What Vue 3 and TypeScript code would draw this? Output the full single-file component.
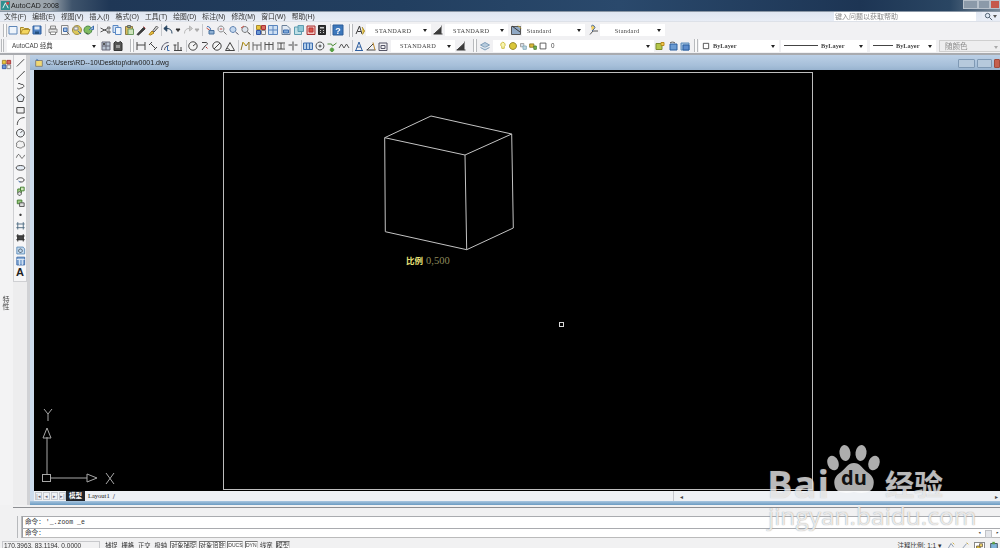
<script setup lang="ts">
type P = [string, string, string];
type Item = { k: 'i' | 'sep' | 'grip' | 'sp' | 'combo'; w: number; n?: string; text?: string; center?: boolean; line?: number; lead?: boolean; off?: boolean; cls?: string };

const K = '#3a3a3a', B = '#3c6cae', L = '#a9c4e4', Y = '#e9c53f', G = '#57a043', R = '#c74a3e', N = 'none';

const icons: Record<string, P[]> = {
  new: [['M2 2.500h8v7.500h-8z', '#5e86b8', '#eef4fb']],
  open: [['M1.500 10V3.500h3l1 1h4v1.500', '#a88a2c', '#f1d873'], ['M1.500 10l2-4.500h7.500l-2 4.500z', '#b18f2c', '#f4d65f']],
  save: [['M2 2h8v8h-8z', '#2f5f9f', '#4f82c4'], ['M3.500 2.500h5v3h-5z', N, '#dfe9f5'], ['M4 7.500h4v2.500h-4z', N, '#24507f']],
  print: [['M3.500 2h5v3h-5zM2 5h8v3.500h-8z', '#888', '#e8e8e8'], ['M3.500 8h5v2.500h-5z', '#888', '#fff']],
  prev: [['M2.500 1.500h6.500v9h-6.500z', '#888', '#f5f5f5'], ['M8 8l2.500 2.500', '#666', N], ['M4.500 4h3.500v3.500h-3.500z', '#3f6cae', L]],
  plot: [['M6 1.500a4.500 4.500 0 1 1-.1 0z', '#a08e45', '#ddc85a'], ['M3 3h4v3h-4z', '#888', '#eee'], ['M7 7l3 3', B, N]],
  pub: [['M5 2a4 4 0 1 1-.1 0z', '#4d8a4a', '#7fbb60'], ['M6 6l4.500-4v3.500h-2', B, L], ['M3 8.500l2 2', K, N]],
  cut: [['M1.500 4l7 3.500M1.500 8l7-3.500', '#555', N], ['M8.500 3h2.500v2h-2.500zM8.500 7h2.500v2h-2.500z', '#777', '#aaa']],
  copy: [['M2 1.500h5v7h-5z', '#5a88c4', '#d8e6f6'], ['M4.500 3.500h5.500v7h-5.500z', '#5a88c4', '#eef5fc']],
  paste: [['M2.500 2.500h7v8h-7z', '#8a7a46', '#d9b95a'], ['M4.500 1.500h3v2h-3z', '#666', '#9ab98a'], ['M5 5h5.500v5.500h-5.500z', '#6b9a5f', '#cfe4bd']],
  match: [['M2 10.500l6.500-7 1.500 1.500-6.500 6z', K, K], ['M8.500 2.500l2 2', '#b44', N]],
  brush: [['M2 10.500l3-3.500 2 2-3.500 2z', '#a87d1c', Y], ['M6 6.500l3.500-4.500 1.500 1.500-4 4.500z', '#555', '#d9d9d9']],
  undo: [['M10 9.500c0-3.500-2-5-5-5H3', '#24425f', N], ['M4.800 1.800L1.800 4.500l3 2.700z', '#24425f', '#24425f']],
  redo: [['M2.500 9.500c0-3.500 2-5 4.500-5h1.500', '#b8b8b8', N], ['M7.500 2l3 2.500-3 2.500z', '#b8b8b8', '#c8c8c8']],
  arrowK: [['M4 5h4L6 7.500z', '#333', '#333']],
  arrowG: [['M4 5h4L6 7.500z', '#aaa', '#aaa']],
  pan: [['M2.500 4l7 5', R, N], ['M3 2.500c3 0 4 2 3.500 4.500', '#3e6fb0', N], ['M5 6.500h5v3.500h-5z', '#456e9d', '#8fb0d3']],
  zoomr: [['M5 2a3 3 0 1 1-.1 0z', '#888', '#e9eef4'], ['M7.500 7.500l3 3', '#777', N], ['M3.800 5h2.400', R, N]],
  zoomw: [['M5 2.500a3 3 0 1 1-.1 0z', '#5b7fae', '#c3d7ee'], ['M7.500 8l3 2.500', '#556', N]],
  zoomp: [['M5 2.500a3 3 0 1 1-.1 0z', '#777', '#dde4ed'], ['M7.500 8l3 2.500', K, N], ['M1 4l3-2', R, N]],
  prop: [['M1.500 1.500h4v4h-4z', '#a88a2c', Y], ['M6.500 1.500h4v4h-4z', '#a33', '#d76a5e'], ['M1.500 6.500h4v4h-4z', '#35a', '#6c9bd2'], ['M6.500 6.500h4v4h-4z', '#888', '#eee']],
  dc: [['M1.500 1.500h9v9h-9z', '#5a85be', '#cfe0f3'], ['M1.500 6h9M6 1.500v9', '#5a85be', N]],
  tp: [['M2 1.500h5l3 3v6h-8z', '#6b7f98', '#e3eaf3'], ['M3.500 6h5v3h-5z', '#3e6fb0', '#7fa9d8']],
  ss: [['M1.500 3h7v7.500h-7z', '#5d9cb0', '#bfe0e6'], ['M5 1.500h5.500v6h-5.500z', '#5d9cb0', '#8fc7d6']],
  mk: [['M2 2h8v8.500h-8z', '#a33', '#f0c3bd'], ['M4 4h4v4h-4z', '#b33', '#d9574a']],
  calc: [['M2.500 1.500h7v9h-7z', '#222', '#333'], ['M4 3h4v1.500h-4zM4 6h1v1h-1zM7 6h1v1h-1zM4 8h1v1h-1zM7 8h1v1h-1z', N, '#ccc']],
  help: [['M1 1h10v10h-10z', '#2c5c98', '#3d78bc']],
  tstyle: [['M2 10L5.500 2 8 10', K, N], ['M3.500 7.500h3.500', K, N], ['M8 3l2.500 4-2 3.500', '#a88a2c', Y]],
  dstyle: [['M1.500 10h9', K, N], ['M2 10l7-6.500v6.500', K, K], ['M9.500 1.500v3', '#888', N]],
  tbl: [['M1.500 2.500h9v8h-9z', '#555', '#8fa8c4'], ['M2 2l8 6', K, N], ['M8 1.500l3 3', Y, N]],
  mlead: [['M3 2.500a2 2 0 1 1 3 2.500l-2 2', '#4a6da0', '#f2cf63'], ['M2 10.500l3-3.500 5 0', '#555', N]],
  workspace: [['M2 2h8v8h-8z', '#667', '#b9c4d2'], ['M2 6h8M6 2v8', '#667', N], ['M3 3h2v2h-2z', N, '#555']],
  wsdark: [['M2 3l1.500-1.500 2.500 1.500 2.500-1.500L10 3v7.500h-8z', '#333', '#555'], ['M4 5h4v3h-4z', N, '#999']],
  dlin: [['M2 2v8M10 2v8M2 5h8', '#444', N]],
  dal: [['M2 5l3-3M3.500 3.500l5 5M7 10l3-3', '#444', N]],
  darc: [['M2.500 10c0-4 3-7.500 7-7.500', '#556', N], ['M5.500 10c0-2.500 2-4.500 4.500-4.500', '#556', N], ['M8.500 6v4.500h2', '#3e6fb0', N]],
  dord: [['M2 10.500h8M6 2v8.500M3 5v5.500M9 7v3.500M1.500 5h3', '#444', N]],
  dr: [['M6 1.800a4.200 4.200 0 1 1-.1 0z', '#444', '#f4f4f4'], ['M6 6l3-2.500', '#444', N]],
  dj: [['M3 2.500h4c2 0 2 2-1 3.500l-3 4', '#444', N], ['M7 7l1.500 1.500', '#b33', N]],
  dd: [['M6 1.800a4.200 4.200 0 1 1-.1 0z', '#444', '#f4f4f4'], ['M3 9l6-6', '#444', N]],
  dang: [['M1.500 10.500h9L6 2.500z', '#444', '#f4f4f4'], ['M2.500 8.500c1.500 0 3 .5 3.500 2', '#444', N]],
  dqk: [['M2 10l2-8 3 4 3-4v8', '#8a7320', N], ['M4 2l2 3.500', Y, N]],
  dbase: [['M2 2v8.500M10 2v8.500M2 5h8', '#666', N], ['M6 5v5', '#666', N]],
  dcont: [['M2 2v8M6 2v8M10 2v8M2 4.500h8', '#555', N]],
  dspace: [['M2 3h8M2 9h8M6 3v6', '#444', N], ['M3 3v6M9 3v6', '#999', N]],
  dbreak: [['M6 1.500v9M1.500 5h3.500M7.500 5h3', '#444', N]],
  tol: [['M1.500 3h9v6.500h-9z', '#3e6fb0', '#b4cee9'], ['M4.500 3v6.500M7.500 3v6.500', '#3e6fb0', N]],
  cen: [['M6 2a4 4 0 1 1-.1 0z', '#555', '#eef2f6'], ['M4.500 6h3M6 4.500v3', '#444', N]],
  ins: [['M1.500 4h4l1 2 4-3', '#4a8a36', N], ['M6 8a1.800 1.800 0 1 1-.1 0z', G, G]],
  wav: [['M1 8l2.500-4 2.500 4 2.500-4 2.500 4', '#555', N]],
  da: [['M2 10.500h8M3 10l3-8 3 8M4 7h4', '#2f5f9f', N]],
  dup: [['M1.500 10h9', '#444', N], ['M2 10l6-6', '#444', N], ['M8 2.500l2 7.500', '#b8862c', N]],
  dsty2: [['M2 3v7.500h8V3M2 3h8', '#556', N], ['M4 5.500h4v3h-4z', '#556', N]],
  layer: [['M1.500 5L6 2.500 10.500 5 6 7.500z', '#7f9db8', '#b7cbdd'], ['M1.500 7.500L6 10l4.500-2.500', '#7f9db8', '#d2e0ec']],
  bulb: [['M5.500 1.500a3 3 0 0 1 2 5.300v2h-3v-2a3 3 0 0 1 1-5.300z', '#c9b52e', '#f8f6b0']],
  sun: [['M6 1.800a4.200 4.200 0 1 1-.1 0z', '#88791c', '#d9c63a']],
  lockl: [['M3 3h4v4h-4z', '#999', '#d3dde7'], ['M6 6h4v4h-4z', '#7ea7b8', '#c3d9e3']],
  plotl: [['M2 3.500h5v4h-5z', '#86701f', '#d9bb3a'], ['M7 6h3v4h-3z', '#3e7a2c', '#83bb54']],
  sq: [['M2.500 2.500h7v7h-7z', '#444', '#fff']],
  la1: [['M2 3.500h6v6h-6z', '#7b8b2c', '#b4c64a'], ['M7 2.500h3v3h-3z', '#b68a1c', '#f1c84c']],
  la2: [['M3 4h7v6h-7z', '#2b5f9f', '#6b9bd2'], ['M3 3a3 2 0 0 1 5 0', '#555', N]],
  la3: [['M2 3h8v7h-8z', '#5b8ab8', '#a4c3e2'], ['M4 5h6v5h-6z', '#2b5f9f', '#5c8ccc']],
  tline: [['M2 10l8-8', K, N]],
  pline: [['M2 10.500L10 2.500', K, N], ['M2 10.500h1M9.500 2.500h1', K, N]],
  poly2: [['M2.500 8.500c2 2 3 0 4 0s4-1 3-3-3 0-4-2h-2', K, N]],
  pgon: [['M6 2l4 3-1.500 5h-5L2 5z', K, '#e9eef4']],
  rect: [['M2 3.500h8v6h-8z', K, '#f0f0f0']],
  arc: [['M2.500 10.500c0-5 3-8 8-8', K, N]],
  circ: [['M6 2a4.300 4.300 0 1 1-.1 0z', K, '#eef2f6'], ['M6 6l2.500-2.500', K, N]],
  cloud: [['M3 3c1-2 3-1 4-.500 2-.5 3 1 3 2.500 1 1.500 0 4-2 3.500-1 1.500-3 1-4 .5-2 .5-3-2-2-3-1-1 0-3 1-3z', '#666', '#f2f2f2']],
  spl: [['M1.500 8c2-5 3-4 4.500-1s3 1 4.500-2', '#555', N]],
  ell: [['M6 3.500c3 0 4.700 1 4.700 2.500s-1.700 2.500-4.700 2.500S1.300 7.500 1.300 6 3 3.500 6 3.500z', K, '#e5edf6']],
  ella: [['M2 6c1-3 7-3 8 0 0 2-3 3-5 2', K, N], ['M4 7l1.500 2', '#3e6fb0', N]],
  blk: [['M3 4h4v4h-4z', '#3e7a2c', '#a9d18f'], ['M6 2h4v4h-4z', '#3e7a2c', '#cfe6bb'], ['M5 7a2 2 0 1 1-.1 0z', '#444', '#e7e7e7']],
  blk2: [['M2.500 3h5v4h-5z', '#3e7a2c', '#98c77e'], ['M5 6h5v4h-5z', '#555', '#dcdcdc']],
  pt: [['M5.300 5.300h1.400v1.400h-1.400z', K, K]],
  hat: [['M3 2v8M9 2v8M1.500 4h9M1.500 8h9', '#4d6a80', N]],
  hat2: [['M3 2v8M9 2v8M1.500 4h9M1.500 8h9', '#222', N], ['M3 4h6v4h-6z', '#333', '#444']],
  reg: [['M2 3h7l1.500 2v5.500h-8.500z', '#5f8cb8', '#c5dbef'], ['M6 5a2 2 0 1 1-.1 0z', '#456', N]],
  table: [['M2 2h8.500v8.500h-8.500z', '#3b6aa8', '#87abd6'], ['M2 4.500h8.500M5 4.500v6M8 4.500v6', '#e2ecf7', N]],
};

const ic = (n: string, w = 12): Item => ({ k: 'i', w, n });
const sep = (w = 4): Item => ({ k: 'sep', w });
const grip = (w = 4): Item => ({ k: 'grip', w });
const sp = (w: number): Item => ({ k: 'sp', w });
const combo = (w: number, text: string, o: Partial<Item> = {}): Item => ({ k: 'combo', w, text, ...o });

const row1: Item[] = [
  sp(3), grip(3.700), ic('new'), ic('open'), ic('save'), sep(), ic('print'), ic('prev'), ic('plot'), ic('pub'), sep(),
  ic('cut'), ic('copy'), ic('paste'), ic('match'), ic('brush'), sep(),
  ic('undo', 10), ic('arrowK', 10), ic('redo', 10), ic('arrowG', 8), sep(3),
  ic('pan'), ic('zoomr'), ic('zoomw'), ic('zoomp'), sep(3),
  ic('prop'), ic('dc', 13), ic('tp', 13), ic('ss'), ic('mk'), ic('calc', 11), sep(), ic('help'),
  sp(5), grip(), sp(1), ic('tstyle', 12),
  combo(65, 'STANDARD', { center: true, cls: 'serif' }), sp(1), ic('dstyle', 13),
  combo(63, 'STANDARD', { center: true, cls: 'serif' }), sp(2), ic('tbl', 12),
  combo(63, 'Standard', { cls: 'serif' }), sp(3), ic('mlead', 12),
  combo(65, 'Standard', { center: true, cls: 'serif' }),
];
const row2: Item[] = [
  sp(1), grip(3), sp(3), combo(93, 'AutoCAD 经典'), ic('workspace'), ic('wsdark'), sp(6), grip(), sp(1),
  ic('dlin'), ic('dal'), ic('darc'), ic('dord', 13), sep(3),
  ic('dr'), ic('dj'), ic('dd'), ic('dang', 13), sep(3),
  ic('dqk', 12), ic('dbase'), ic('dcont'), ic('dspace'), ic('dbreak', 12), sep(3),
  ic('tol'), ic('cen'), ic('ins'), ic('wav', 12), sep(3), ic('da', 12), ic('dup', 12), ic('dsty2', 11),
  sp(3), combo(64, 'STANDARD', { center: true, cls: 'serif' }), ic('dstyle', 12), sp(6), grip(), sp(2), ic('layer', 12), sp(2),
  combo(161, '0', { lead: true }), ic('la1', 12), ic('la2', 13), ic('la3', 12), sp(3), grip(), sp(1),
  combo(80, 'ByLayer', { cls: 'serif bold', n: 'sq' }), sp(2),
  combo(86, 'ByLayer', { cls: 'serif bold', line: 34 }), sp(3),
  combo(66, 'ByLayer', { cls: 'serif bold', line: 20 }), sp(3),
  combo(64, '随颜色', { off: true }),
];
const menus = ['文件(F)', '编辑(E)', '视图(V)', '插入(I)', '格式(O)', '工具(T)', '绘图(D)', '标注(N)', '修改(M)', '窗口(W)', '帮助(H)'];
const draw = ['tline', 'pline', 'poly2', 'pgon', 'rect', 'arc', 'circ', 'cloud', 'spl', 'ell', 'ella', 'blk', 'blk2', 'pt', 'hat', 'hat2', 'reg', 'table'];
const status: { t: string; on?: boolean; latin?: boolean }[] = [
  { t: '捕捉' }, { t: '栅格' }, { t: '正交' }, { t: '极轴' }, { t: '对象捕捉', on: true }, { t: '对象追踪', on: true },
  { t: 'DUCS', on: true, latin: true }, { t: 'DYN', on: true, latin: true }, { t: '线宽' }, { t: '模型', on: true },
];
</script>

<template>
  <div class="app">
    <header class="titlebar">
      <svg class="appicon" viewBox="0 0 10 10"><rect width="10" height="10" fill="#2f8f8f" /><path d="M2 8l3-6 3 6" stroke="#fff" fill="none" /><rect x="6" y="1" width="3" height="3" fill="#c44" /></svg>
      <span class="apptitle">AutoCAD 2008</span>
      <div class="winctl"><i class="c1"></i><i class="c2"></i><i class="c3"></i></div>
    </header>

    <nav class="menubar">
      <span v-for="m in menus" :key="m" class="menu">{{ m }}</span>
      <div class="helpbox">键入问题以获取帮助</div>
      <div class="helpbtn">
        <svg viewBox="0 0 10 10" width="9" height="9"><circle cx="4" cy="4" r="2.500" stroke="#456" fill="#dfe9f5" /><path d="M6 6l3 3" stroke="#456" /></svg>
        <span class="tri"></span>
      </div>
    </nav>

    <section class="toolbars">
      <div v-for="(row, ri) in [row1, row2]" :key="ri" class="tbrow">
        <template v-for="(it, i) in row" :key="i">
          <div v-if="it.k === 'i'" class="slot" :style="{ width: it.w + 'px' }">
            <svg viewBox="0 0 12 12" width="12" height="12" class="ic">
              <path v-for="(p, j) in icons[it.n!]" :key="j" :d="p[0]" :stroke="p[1]" :fill="p[2]" stroke-width="1" />
              <text v-if="it.n === 'help'" x="6" y="9.500" text-anchor="middle" class="qm">?</text>
            </svg>
          </div>
          <div v-else-if="it.k === 'sep'" class="sep" :style="{ width: it.w + 'px' }"></div>
          <div v-else-if="it.k === 'grip'" class="grip" :style="{ width: it.w + 'px' }"></div>
          <div v-else-if="it.k === 'sp'" :style="{ width: it.w + 'px', flex: 'none' }"></div>
          <div v-else class="combo" :class="[it.cls, { off: it.off, center: it.center }]" :style="{ width: it.w + 'px' }">
            <template v-if="it.lead">
              <svg v-for="n in ['bulb', 'sun', 'lockl', 'plotl', 'sq']" :key="n" viewBox="0 0 12 12" width="10" height="10" class="leadic">
                <path v-for="(p, j) in icons[n]" :key="j" :d="p[0]" :stroke="p[1]" :fill="p[2]" />
              </svg>
            </template>
            <svg v-if="it.n" viewBox="0 0 12 12" width="8" height="8" class="leadic"><path d="M2 2h8v8h-8z" stroke="#333" fill="#fff" stroke-width="1.200" /></svg>
            <span v-if="it.line" class="cline" :style="{ width: it.line + 'px' }"></span>
            <span class="ctext">{{ it.text }}</span>
            <span class="tri"></span>
          </div>
        </template>
      </div>
    </section>

    <main class="main">
      <aside class="props">
        <svg viewBox="0 0 12 12" width="11" height="11" class="propsic"><path v-for="(p, j) in icons.prop" :key="j" :d="p[0]" :stroke="p[1]" :fill="p[2]" /></svg>
        <span class="propslabel">特性</span>
      </aside>
      <aside class="drawbar">
        <div class="drawcol">
          <svg v-for="d in draw" :key="d" viewBox="0 0 12 12" width="11" height="11.670" class="dic"><path v-for="(p, j) in icons[d]" :key="j" :d="p[0]" :stroke="p[1]" :fill="p[2]" /></svg>
          <span class="biga">A</span>
        </div>
      </aside>
      <div class="gutter"></div>
      <section class="docwin">
        <div class="doctitle">
          <svg viewBox="0 0 12 12" width="10" height="10"><path d="M2 3h8v7h-8z" fill="#f1d873" stroke="#777" /><path d="M3 1l3 2H3z" fill="#3c6cae" /></svg>
          <span>C:\Users\RD--10\Desktop\drw0001.dwg</span>
          <div class="docctl"><i></i><i class="mx"></i><i class="close"></i></div>
        </div>
        <div class="docframe">
          <svg class="canvas" viewBox="34 70 966 421" width="966" height="421">
            <rect x="223.500" y="72.500" width="589" height="417" fill="none" stroke="#bdbdbd" />
            <path d="M384.700 137.700L431 116 511.700 134 465 155zM384.700 137.700L385.300 231.700 466.700 249.700 465 155M466.700 249.700L513.300 228 511.700 134" fill="none" stroke="#c4c4c4" />
            <text x="406" y="264" class="lbl">比例</text>
            <text x="426" y="264" class="val">0,500</text>
            <rect x="559.500" y="322.500" width="4" height="4" fill="none" stroke="#d8d8d8" />
            <g fill="none" stroke="#a8a8a8">
              <path d="M47 437V474M50 478H87" />
              <path d="M47 428L43 438H51zM87 474L97 478L87 482z" />
              <rect x="42.500" y="474.500" width="8" height="7" />
              <path d="M44 409L48 414L52 409M48 414V421" />
              <path d="M106 473L114 484M114 473L106 484" />
            </g>
          </svg>
          <div class="tabs">
            <div class="navs"><i>|◂</i><i>◂</i><i>▸</i><i>▸|</i></div>
            <span class="tab active">模型</span>
            <span class="tab">Layout1</span>
            <span class="slash">/</span>
            <div class="hscroll"><span>◂</span><span>▸</span></div>
          </div>
          <div class="framebottom"></div>
        </div>
      </section>
    </main>

    <section class="cmd">
      <div class="cmdgrip"></div>
      <div class="cmdlines">
        <div class="cl">命令: '_.zoom _e</div>
        <div class="cl last">命令:
          <div class="vs"><span>◂</span><i></i><span>▸</span></div>
        </div>
      </div>
    </section>

    <footer class="status">
      <div class="coords">170.3963, 83.1194, 0.0000</div>
      <div class="sbtns">
        <span v-for="s in status" :key="s.t" class="sb" :class="{ on: s.on, latin: s.latin }">{{ s.t }}</span>
      </div>
      <div class="sright">
        <span>注释比例: 1:1 ▾</span>
        <svg viewBox="0 0 12 12" width="10" height="10"><path d="M2 10L6 3l3 4" stroke="#7a8ca4" fill="none" /><path d="M8 2l2 2" stroke="#c9a52c" /></svg>
        <svg viewBox="0 0 12 12" width="10" height="10"><path d="M2 10L8 3" stroke="#7a8ca4" /><path d="M8 2l2 2" stroke="#c9a52c" /></svg>
        <span class="boxed"><svg viewBox="0 0 12 12" width="9" height="9"><path d="M2 4h5v7H2z" fill="#d9bb3a" stroke="#654" /><path d="M6 1h4v4H6z" fill="#f0d66a" stroke="#654" /></svg></span>
        <svg viewBox="0 0 12 12" width="10" height="10"><path d="M2 3h8v8H2z" fill="#7fb3d8" stroke="#345" /><path d="M4 1h3v3H4z" fill="#5aa043" /></svg>
      </div>
    </footer>

    <div class="wm">
      <span class="wmbai">Bai</span>
      <svg class="wmpaw" viewBox="0 0 60 56" width="60" height="56">
        <g fill="rgba(255,255,255,.68)">
          <ellipse cx="19" cy="11" rx="5.500" ry="8" transform="rotate(-8 19 11)" />
          <ellipse cx="35" cy="11" rx="5.500" ry="8" transform="rotate(8 35 11)" />
          <ellipse cx="7" cy="21" rx="5.500" ry="7.500" transform="rotate(-20 7 21)" />
          <ellipse cx="48" cy="21" rx="5.500" ry="7.500" transform="rotate(20 48 21)" />
          <path d="M28 21c6 0 8 5 13 9 6 4 8 8 6 15-2 6-10 7-19 5-9 2-17 1-19-5-2-7 0-11 6-15 5-4 7-9 13-9z" />
        </g>
        <text x="28" y="43" text-anchor="middle" class="wmdu">du</text>
      </svg>
      <span class="wmjy">经验</span>
      <span class="wmurl">jingyan.baidu.com</span>
    </div>
  </div>
</template>

<style>
html, body { margin: 0; background: #000; }
</style>

<style scoped>
.app {
  position: relative; width: 1000px; height: 548px; overflow: hidden; display: flex; flex-direction: column;
  font-family: "Liberation Sans", "Noto Sans CJK SC", sans-serif; background: #f1f1f2; color: #222;
}
.titlebar {
  height: 12px; flex: none; display: flex; align-items: center; position: relative;
  background: linear-gradient(90deg, #aab1b6 0, #9aa3ab 50px, #3f546c 72px, #1f3756 110px, #223f60 400px, #2a496c 620px, #1d3554 860px, #2a4663 950px, #7b8a99 1000px);
  border-bottom: 1px solid #8a97a6; box-sizing: border-box;
}
.appicon { width: 9px; height: 9px; margin-left: 1px; }
.apptitle { font-size: 7px; letter-spacing: .1px; margin-left: 1px; color: #1b1b1b; filter: blur(.3px); }
.winctl { position: absolute; right: 0; top: 0; display: flex; height: 9px; }
.winctl i { display: block; height: 9px; border: 1px solid #b7c1cb; box-sizing: border-box; background: #8b9aa9; }
.winctl .c1 { width: 15px; }
.winctl .c2 { width: 12px; }
.winctl .c3 { width: 10px; background: #c6584a; }
.menubar {
  height: 10px; flex: none; display: flex; align-items: center; gap: 6px; padding-left: 4px;
  background: linear-gradient(#dfe6f1, #e8edf6); box-sizing: border-box; border-bottom: 1px solid #dde1e8;
}
.menu { font-size: 6.800px; line-height: 10px; color: #333; filter: blur(.3px); white-space: nowrap; }
.helpbox {
  margin-left: auto; width: 142px; height: 9px; background: #fff; font-size: 7px; line-height: 9px; color: #8a8a8a; padding-left: 1px; box-sizing: border-box; filter: blur(.2px);
}
.helpbtn { width: 18px; height: 9px; display: flex; align-items: center; gap: 2px; padding-left: 2px; box-sizing: border-box; background: #e8edf6; position: relative; }
.helpbtn .tri { top: 3px; right: 3px; border-top-color: #555; }
.toolbars {
  height: 31px; flex: none; background: #f1f1f3; border-bottom: 2px solid #a9abaf; display: flex; flex-direction: column;
}
.tbrow { height: 15px; flex: none; display: flex; align-items: center; margin-top: .500px; }
.slot { flex: none; display: flex; justify-content: center; align-items: center; height: 14px; }
.ic { flex: none; filter: blur(.4px); overflow: visible; }
.qm { font: bold 9px "Liberation Sans", sans-serif; fill: #fff; }
.sep { flex: none; height: 12px; position: relative; }
.sep::after { content: ""; position: absolute; left: 50%; top: 0; bottom: 0; width: 1px; background: #c6c8cc; }
.grip { flex: none; height: 13px; box-sizing: border-box; border-left: 1px solid #b8babd; border-right: 1px solid #b8babd; background: #fafafa; }
.combo {
  flex: none; height: 12px; position: relative; display: flex; align-items: center; background: #fff; box-sizing: border-box;
  font-size: 6.300px; color: #444; padding-left: 5px; white-space: nowrap;
}
.combo.center { justify-content: center; padding: 0 10px 0 0; }
.combo.serif { font-family: "Liberation Serif", serif; letter-spacing: .3px; }
.combo.bold { font-weight: bold; letter-spacing: 0; padding-left: 3px; }
.combo.off { background: #eeeeef; color: #8c8c8c; border: 1px solid #cfcfcf; font-size: 7.500px; padding-left: 5px; }
.combo.off .tri { border-top-color: #aaa; }
.ctext { filter: blur(.3px); }
.tri { position: absolute; right: 4px; top: 5px; width: 0; height: 0; border: 2px solid transparent; border-top: 3px solid #222; border-bottom: 0; }
.leadic { flex: none; margin-right: 0; filter: blur(.3px); }
.combo .leadic + .ctext { margin-left: 3px; }
.cline { display: block; flex: none; height: 1px; background: #444; margin-right: 3px; }
.main { flex: 1; min-height: 0; display: flex; }
.props { width: 13px; flex: none; background: #f3f3f4; position: relative; }
.propsic { position: absolute; left: 1px; top: 4px; filter: blur(.3px); }
.propslabel { position: absolute; top: 241px; left: 0; writing-mode: vertical-rl; font-size: 7px; color: #444; filter: blur(.25px); }
.drawbar { width: 14px; flex: none; background: #ededee; }
.drawcol {
  display: flex; flex-direction: column; align-items: center; background: #f6f6f7; padding-top: 2px; height: 227px; box-sizing: border-box;
  border-left: 1px solid #cfd0d3; border-right: 1px solid #cfd0d3; border-bottom: 1px solid #cfd0d3;
}
.dic { flex: none; filter: blur(.35px); }
.biga { font-size: 11px; line-height: 12px; font-weight: bold; color: #222; margin-top: -1px; }
.gutter { width: 3px; flex: none; background: #d1d2d5; }
.docwin { flex: 1; min-width: 0; display: flex; flex-direction: column; }
.doctitle {
  height: 15px; flex: none; display: flex; align-items: center; padding-left: 4px; gap: 2px; font-size: 7px; color: #222; position: relative;
  background: linear-gradient(#bcd0e6, #a6bfd9 70%, #98b3cf); box-sizing: border-box;
}
.doctitle span { filter: blur(.25px); }
.docctl { position: absolute; right: 0; top: 4px; display: flex; gap: 2px; }
.docctl i { display: block; width: 17px; height: 9px; background: #b6c9dc; border: 1px solid #7f99b4; box-sizing: border-box; border-radius: 1px; }
.docctl i.mx { width: 15px; }
.docctl i.close { width: 6px; background: #c5604f; border-color: #a14a3c; }
.docframe { flex: 1; min-height: 0; display: flex; flex-direction: column; background: #cddced; padding-left: 4px; }
.canvas { display: block; flex: none; background: #000; }
.lbl { font: bold 8.500px "Noto Sans CJK SC", sans-serif; fill: #e8e27a; }
.val { font: 10.500px "Liberation Serif", serif; fill: #8d8a5c; }
.tabs { height: 10px; flex: none; display: flex; align-items: center; background: #eef1f5; position: relative; font-size: 6.500px; }
.navs { display: flex; width: 32px; gap: 1px; padding-left: 1px; box-sizing: border-box; flex: none; }
.navs i { display: block; width: 7px; font-size: 5px; line-height: 6px; text-align: center; font-style: normal; color: #667; border: 1px solid #c6c9cf; box-sizing: border-box; height: 8px; overflow: hidden; }
.tab { font-family: "Liberation Serif", "Noto Sans CJK SC", serif; padding: 0 3px; line-height: 10px; color: #222; }
.tab.active { background: #20242a; color: #fff; font-weight: bold; padding: 0 3px; width: 13px; }
.slash { font-size: 8px; color: #667; }
.hscroll { position: absolute; left: 639px; right: 0; top: 0; height: 10px; display: flex; justify-content: space-between; align-items: center; font-size: 6px; color: #444; padding: 0 2px 0 6px; border-left: 1px solid #c5c7cc; box-sizing: border-box; }
.framebottom { height: 4px; flex: none; background: linear-gradient(#a9c6e0, #6b9bc2); margin-left: -4px; }
.cmd { flex: none; height: 33px; display: flex; background: #f1f1f2; padding-left: 13px; box-sizing: border-box; position: relative; }
.cmdgrip { width: 9px; flex: none; border-top: 1px solid #8d8f93; margin-top: 2px; }
.cmdgrip::after { content: ""; display: block; width: 3px; height: 22px; margin: 8px 0 0 4px; border-left: 1px solid #b7b9bc; border-right: 1px solid #b7b9bc; }
.cmdlines { flex: 1; border-top: 1px solid #8d8f93; margin-top: 2px; padding-top: 8px; }
.cl { height: 12px; line-height: 12px; box-sizing: border-box; background: #fff; font-family: "Liberation Mono", "Noto Sans CJK SC", monospace; font-size: 6.500px; color: #333; padding-left: 2px; border-top: 1px solid #a9abaf; border-left: 1px solid #9a9ca0; position: relative; }
.cl.last { height: 10px; line-height: 9px; border-bottom: 1px solid #bbb; }
.vs { position: absolute; right: 1px; top: 0; display: flex; align-items: center; gap: 4px; font-size: 5px; height: 9px; }
.vs i { display: block; width: 7px; height: 8px; background: #e4e6ea; border: 1px solid #c0c2c6; box-sizing: border-box; }
.status { flex: none; height: 10px; display: flex; align-items: flex-start; position: relative; font-size: 7px; color: #333; background: #f1f1f2; padding-top: 3px; box-sizing: border-box; }
.coords { width: 98px; margin-left: 2px; height: 10px; font-size: 6.500px; line-height: 8px; border: 1px solid #c8c9cc; box-sizing: border-box; padding-left: 1px; flex: none; filter: blur(.25px); }
.sbtns { display: flex; margin-left: 4px; }
.sb { line-height: 7px; height: 10px; padding: 0; margin-right: 1.900px; font-size: 6.300px; white-space: nowrap; border: 1px solid transparent; box-sizing: border-box; filter: blur(.2px); }
.sb.on { border-color: #777 #d0d0d0 #d0d0d0 #777; background: #fbfbfb; margin-right: 1.500px; }
.sb.latin { font-size: 5px; }
.sright { margin-left: auto; display: flex; align-items: center; gap: 4px; padding-right: 1px; font-size: 6.500px; line-height: 8px; }
.boxed { display: block; width: 11px; height: 9px; background: #fff; border: 1px solid #888; box-sizing: border-box; }
.wm { position: absolute; left: 768px; top: 442px; width: 180px; height: 85px; color: rgba(255, 255, 255, .68); pointer-events: none; }
.wmbai { position: absolute; left: -1px; top: 24px; font: bold 38px/34px "Open Sans", "Liberation Sans", sans-serif; letter-spacing: 1px; text-shadow: 0 0 1px rgba(120, 120, 120, .5); }
.wmpaw { position: absolute; left: 58px; top: 0; }
.wmdu { font: bold 20px "Open Sans", "Liberation Sans", sans-serif; fill: #111; }
.wmjy { position: absolute; left: 117px; top: 26px; font: bold 29px/30px "Noto Sans CJK SC", sans-serif; text-shadow: 0 0 1px rgba(120, 120, 120, .5); }
.wmurl { position: absolute; left: 0; top: 62px; font: 24.500px/24px "Open Sans", "Liberation Sans", sans-serif; white-space: nowrap; color: rgba(255, 255, 255, .8); text-shadow: 0 0 1px rgba(110, 110, 110, .8); }
</style>
